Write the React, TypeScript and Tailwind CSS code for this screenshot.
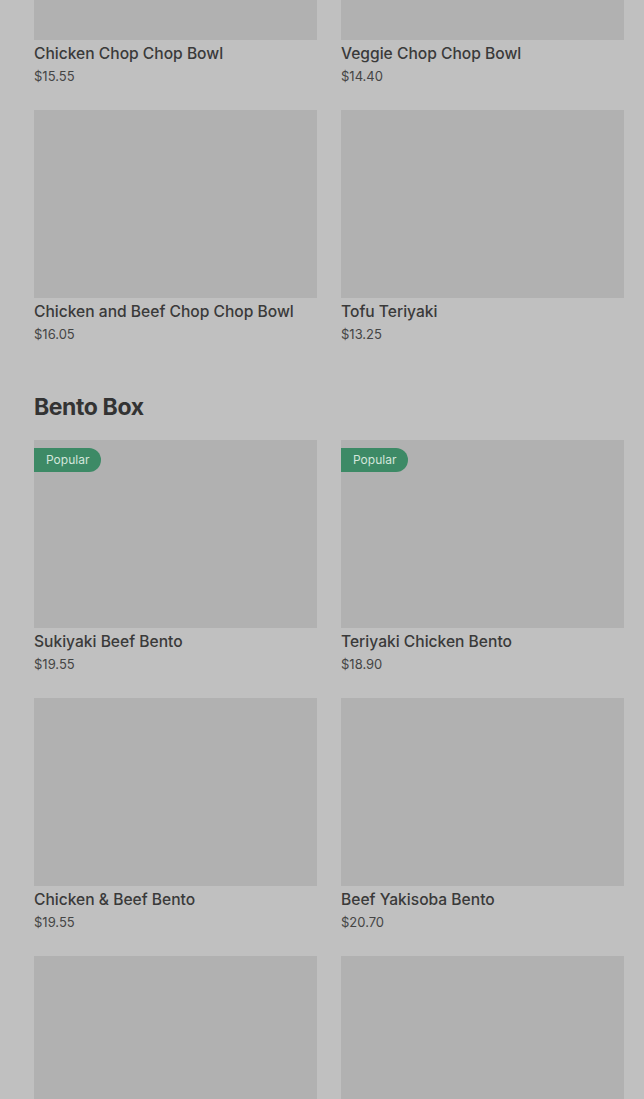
import React from 'react';

type Item = { name?: string; price?: string; popular?: boolean };

const bowls: Item[] = [
  { name: 'Chicken Chop Chop Bowl', price: '$15.55' },
  { name: 'Veggie Chop Chop Bowl', price: '$14.40' },
  { name: 'Chicken and Beef Chop Chop Bowl', price: '$16.05' },
  { name: 'Tofu Teriyaki', price: '$13.25' },
];

// last row is cut off by the fold, only the photos show
const bentos: Item[] = [
  { name: 'Sukiyaki Beef Bento', price: '$19.55', popular: true },
  { name: 'Teriyaki Chicken Bento', price: '$18.90', popular: true },
  { name: 'Chicken & Beef Bento', price: '$19.55' },
  { name: 'Beef Yakisoba Bento', price: '$20.70' },
  {},
  {},
];

function MenuCard({ item }: { item: Item }) {
  return (
    <div className="flex flex-col">
      <div className="flex h-[188px] flex-col items-start bg-[#b1b1b1] pt-[8px]">
        {item.popular && (
          <span className="flex h-[24px] items-center rounded-r-full bg-[#3d8a66] px-[12px] text-[12px] leading-[16px] text-[#d4e6dc]">
            Popular
          </span>
        )}
      </div>
      {item.name && (
        <>
          <div className="mt-[3px] text-[15.6px] font-medium leading-[22px] text-[#3a3a3a]">{item.name}</div>
          <div className="mt-[1px] text-[13px] leading-[20px] text-[#454545]">{item.price}</div>
        </>
      )}
    </div>
  );
}

export default function App() {
  return (
    <div
      className="h-[1099px] overflow-hidden bg-[#c0c0c0] pl-[34px] pr-[20px]"
      style={{ fontFamily: 'Inter, "Noto Sans", sans-serif' }}
    >
      <div className="-mt-[148px] grid grid-cols-2 gap-x-[24px] gap-y-[24px]">
        {bowls.map((b, i) => (
          <MenuCard key={i} item={b} />
        ))}
      </div>
      <h2 className="mt-[47px] mb-[17px] text-[23px] font-bold leading-[32px] tracking-[-0.4px] text-[#333333]">
        Bento Box
      </h2>
      <div className="grid grid-cols-2 gap-x-[24px] gap-y-[24px]">
        {bentos.map((b, i) => (
          <MenuCard key={i} item={b} />
        ))}
      </div>
    </div>
  );
}
